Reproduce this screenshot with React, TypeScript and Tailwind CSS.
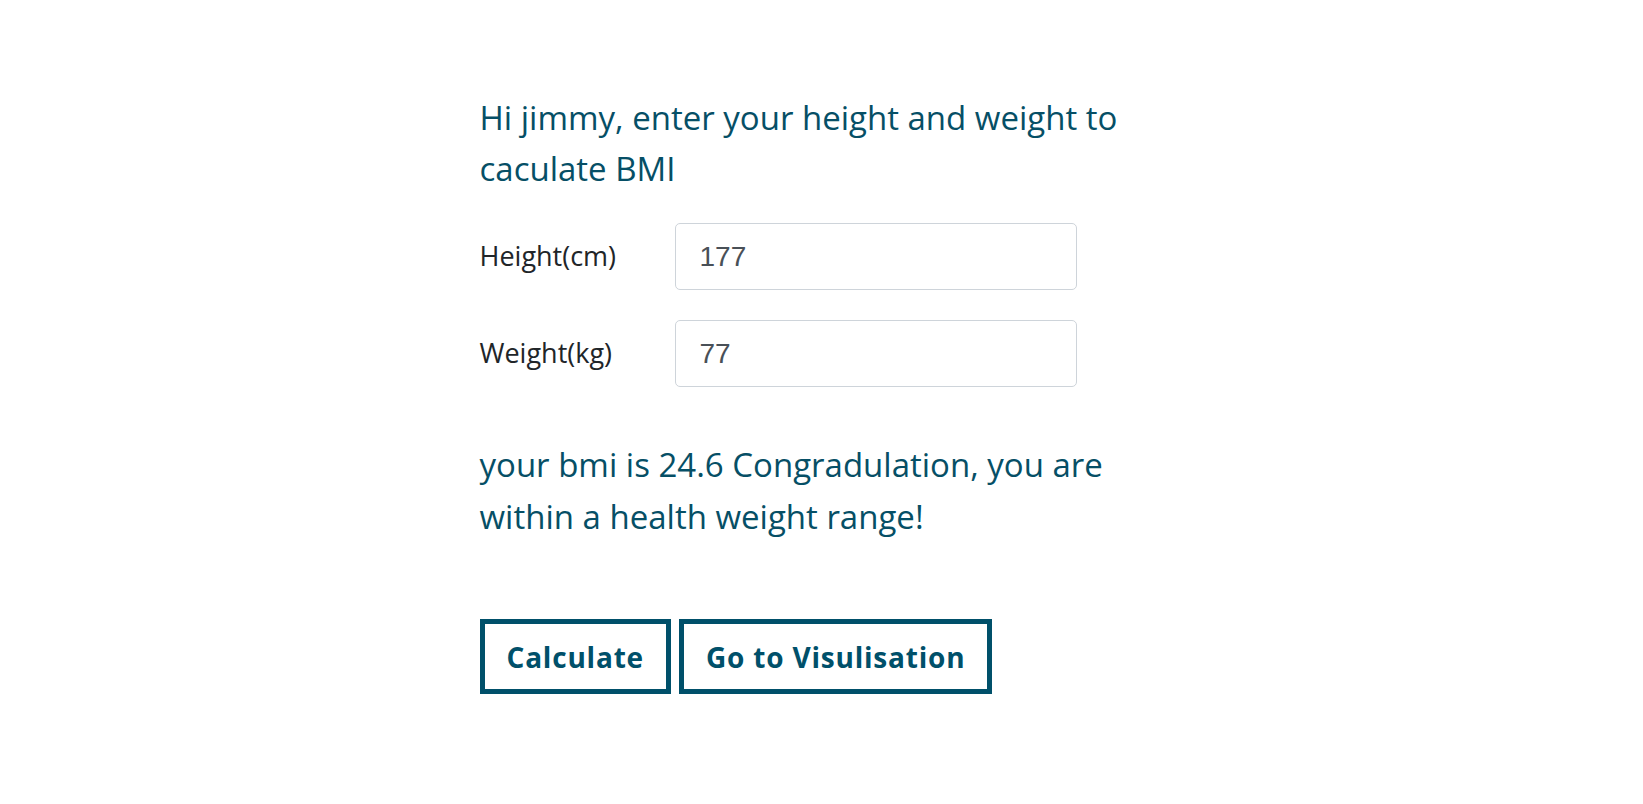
import React, { useState } from "react";

export default function App() {
  const [height, setHeight] = useState("177");
  const [weight, setWeight] = useState("77");

  const fields = [
    { label: "Height(cm)", value: height, onChange: setHeight },
    { label: "Weight(kg)", value: weight, onChange: setWeight },
  ];

  return (
    <div className="min-h-screen bg-white font-['Open_Sans',sans-serif]">
      <div className="mx-auto w-[684px] pt-[92px]">
        <h2 className="text-[33px] leading-[51px] font-normal text-[#064f66]">
          Hi jimmy, enter your height and weight to caculate BMI
        </h2>

        <div className="mt-[29px] flex flex-col gap-[30px]">
          {fields.map((f) => (
            <div key={f.label} className="flex items-center">
              <label className="w-[195px] text-[27px] text-[#212529]">{f.label}</label>
              <input
                value={f.value}
                onChange={(e) => f.onChange(e.target.value)}
                className="h-[67px] w-[402px] rounded-[5px] border border-[#ced4da] pl-[24px] font-['Liberation_Sans',sans-serif] text-[28px] text-[#495057] outline-none"
              />
            </div>
          ))}
        </div>

        <p className="mt-[52px] text-[33px] leading-[52px] text-[#064f66]">
          your bmi is 24.6 Congradulation, you are within a health weight range!
        </p>

        <div className="mt-[76px] flex gap-2">
          <button className="h-[75px] border-[5px] border-[#00506a] px-[22px] text-[28px] font-bold tracking-[0.8px] text-[#00506a]">
            Calculate
          </button>
          <button className="h-[75px] border-[5px] border-[#00506a] px-[22px] text-[28px] font-bold tracking-[0.8px] text-[#00506a]">
            Go to Visulisation
          </button>
        </div>
      </div>
    </div>
  );
}
